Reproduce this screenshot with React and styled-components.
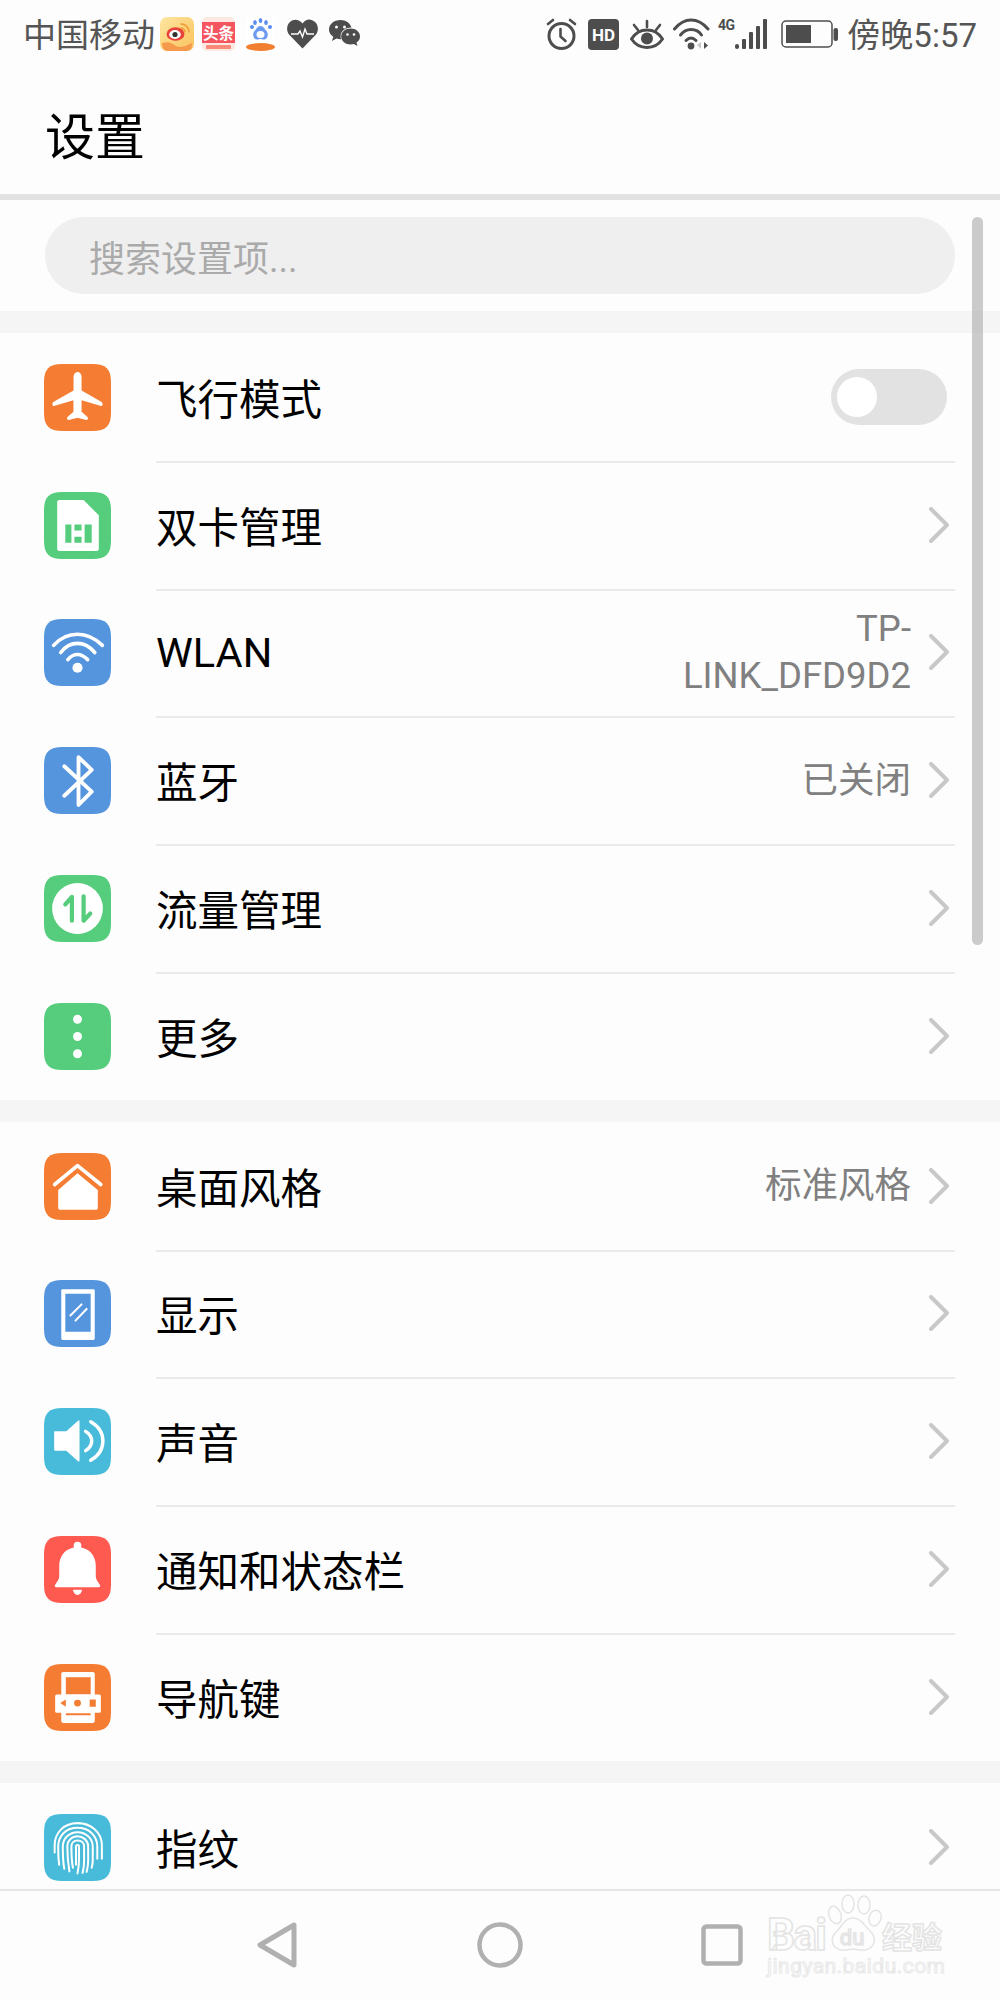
import React from "react";
import styled, { createGlobalStyle } from "styled-components";

const Global = createGlobalStyle`
  html, body { margin: 0; padding: 0; background: #fdfdfd; }
  * { box-sizing: border-box; }
  body { font-family: Roboto, "Noto Sans CJK SC", sans-serif; }
`;

const Phone = styled.div`
  position: relative;
  width: 1000px;
  height: 2000px;
  display: flex;
  flex-direction: column;
  overflow: hidden;
  background: #fdfdfd;
`;
const StatusBar = styled.div`
  height: 68px;
  flex: none;
  display: flex;
  align-items: center;
  justify-content: space-between;
  padding: 0 23px 0 23px;
  color: #555;
  font-size: 33px;
  line-height: 40px;
`;
const StatusGroup = styled.div`
  display: flex;
  align-items: center;
`;
const StatusIcon = styled.svg`
  display: block;
  flex: none;
  margin-left: ${(p) => p.$ml || 0}px;
`;
const Carrier = styled.span`
  white-space: nowrap;
  padding-top: 4px;
`;
const Clock = styled.span`
  margin-left: 9px;
  white-space: nowrap;
  padding-top: 4px;
`;
const TitleBar = styled.header`
  height: 132px;
  flex: none;
  display: flex;
  align-items: center;
  padding: 3px 0 0 45px;
  border-bottom: 6px solid #e2e2e2;
  font-size: 50px;
  color: #000;
`;
const Scroller = styled.main`
  flex: 1;
  min-height: 0;
  overflow: hidden;
`;
const SearchWrap = styled.div`
  height: 111px;
  padding: 17px 45px 0 45px;
`;
const SearchPill = styled.div`
  height: 77px;
  border-radius: 39px;
  background: #efefef;
  color: #aaa;
  font-size: 36px;
  display: flex;
  align-items: center;
  padding-left: 44px;
`;
const Gap = styled.div`
  height: 22px;
  background: #f5f5f5;
`;
const Row = styled.div`
  height: 127.8px;
  display: flex;
  padding: 0 45px 0 44px;
`;
const IconTile = styled.svg`
  display: block;
  flex: none;
  width: 67px;
  height: 67px;
  align-self: center;
  margin: 1px 45px 0 0;
`;
const RowBody = styled.div`
  flex: 1;
  min-width: 0;
  display: flex;
  align-items: center;
  padding-right: 6px;
  margin-bottom: ${(p) => (p.$last ? "0" : "-2px")};
  border-bottom: ${(p) => (p.$last ? "none" : "2px solid #eaeaea")};
`;
const Label = styled.span`
  flex: 1;
  font-size: 41.5px;
  color: #000;
  white-space: nowrap;
`;
const Value = styled.span`
  max-width: 240px;
  text-align: right;
  font-size: 36.5px;
  line-height: 47px;
  color: #808080;
  margin-right: 18px;
`;
const Chevron = styled.svg`
  display: block;
  flex: none;
  width: 20px;
  height: 36px;
`;
const Toggle = styled.div`
  width: 116px;
  height: 56px;
  border-radius: 28px;
  background: #e2e2e2;
  padding: 8px 0 0 6px;
  margin-right: 2px;
`;
const Thumb = styled.div`
  width: 40px;
  height: 40px;
  border-radius: 50%;
  background: #fff;
`;
const ScrollThumb = styled.div`
  position: absolute;
  left: 972px;
  top: 217px;
  width: 11px;
  height: 728px;
  border-radius: 6px;
  background: rgba(170, 170, 170, 0.6);
`;
const NavBar = styled.nav`
  position: relative;
  height: 111px;
  flex: none;
  border-top: 2px solid #e6e6e6;
  background: #fdfdfd;
  display: flex;
  align-items: center;
  padding: 0 0 2px 255px;
`;
const NavIcon = styled.svg`
  display: block;
  flex: none;
  margin-right: ${(p) => p.$mr || 0}px;
`;
const Watermark = styled.svg`
  position: absolute;
  left: 765px;
  top: -1px;
`;

const tile = { orange: "#f57d33", green: "#55cd7c", blue: "#5595dd", cyan: "#47bbd9", red: "#ff5a50" };
const Bg = ({ c }) => <path fill={c} d="M18 0h30c13 0 18 5 18 18v30c0 13-5 18-18 18H18C5 66 0 61 0 48V18C0 5 5 0 18 0z" />;

const icons = {
  plane: (
    <>
      <Bg c={tile.orange} />
      <path fill="#fff" d="M33 8c-2.4 0-3.9 2.2-3.9 5v13L10 37c-1.2.7-1.7 1.5-1.7 2.6 0 1.4 1 2 2.3 1.6L29 35.6V47l-5.3 4.6c-.8.7-1 1.2-1 2.2 0 1 .8 1.6 1.8 1.4l8.5-2.2 8.5 2.2c1 .2 1.8-.4 1.8-1.4 0-1-.2-1.5-1-2.2L37 47V35.6l18.4 5.6c1.3.4 2.3-.2 2.3-1.6 0-1.1-.5-1.9-1.700-2.600L37 26V13c0-2.800-1.600-5-4-5z" />
    </>
  ),
  sim: (
    <>
      <Bg c={tile.green} />
      <path fill="#fff" d="M15 8h24l15 15v33c0 1.2-.8 2-2 2H15c-1.2 0-2-.8-2-2V10c0-1.2.8-2 2-2z" />
      <path fill={tile.green} d="M21 32h6v18h-6zM30 32h7v6h-7zM30 44h7v6h-7zM40 32h7v18h-7z" />
    </>
  ),
  wifi: (
    <>
      <Bg c={tile.blue} />
      <g fill="none" stroke="#fff" strokeWidth="3.6" strokeLinecap="round">
        <path d="M9.5 26C16 18.5 24 15 33 15s17 3.5 24.5 11" />
        <path d="M16.5 33C21 27 27 24 33 24s12 3 17 9" />
        <path d="M23.5 40c2.5-3 6-5 9.5-5s7 2 10 5" />
      </g>
      <circle cx="33" cy="48" r="5" fill="#fff" />
    </>
  ),
  bt: (
    <>
      <Bg c={tile.blue} />
      <path fill="none" stroke="#fff" strokeWidth="3.8" strokeLinecap="round" strokeLinejoin="round" d="M20 19l27 25-13 13V10l13 12.5L20 48" />
    </>
  ),
  data: (
    <>
      <Bg c={tile.green} />
      <circle cx="33" cy="33" r="25" fill="#fff" />
      <g fill="none" stroke={tile.green} strokeWidth="4.2" strokeLinecap="round" strokeLinejoin="round">
        <path d="M27.5 45V21.5L21 29" />
        <path d="M39 21v24l6.5-7" />
      </g>
    </>
  ),
  more: (
    <>
      <Bg c={tile.green} />
      <circle cx="33" cy="16" r="4.4" fill="#fff" />
      <circle cx="33" cy="33" r="4.4" fill="#fff" />
      <circle cx="33" cy="50" r="4.4" fill="#fff" />
    </>
  ),
  home: (
    <>
      <Bg c={tile.orange} />
      <path fill="none" stroke="#fff" strokeWidth="3.6" strokeLinecap="round" strokeLinejoin="round" d="M10.5 31L33 12.5 56 31" />
      <path fill="#fff" d="M33 20l20 16.5V54c0 1.3-.7 2-2 2H16c-1.3 0-2-.7-2-2V36.5z" />
    </>
  ),
  display: (
    <>
      <Bg c={tile.blue} />
      <path fill="#fff" fillRule="evenodd" d="M18.5 9h30c1 0 1.5.5 1.5 1.5v47c0 1-.5 1.5-1.5 1.5h-30c-1 0-1.5-.5-1.5-1.5v-47c0-1 .5-1.5 1.5-1.5zM21 13.5V51h25V13.5z" />
      <path fill="none" stroke="#fff" strokeWidth="2" strokeLinecap="round" d="M26 35l11-11M31 40l11-11.5" />
    </>
  ),
  sound: (
    <>
      <Bg c={tile.cyan} />
      <path fill="#fff" d="M11 23h11l11.5-10.5c.9-.7 1.500-.3 1.500.8v38.400c0 1.100-.6 1.500-1.500.8L22 42H11c-.7 0-1-.4-1-1V24c0-.6.3-1 1-1z" />
      <g fill="none" stroke="#fff" strokeWidth="3.4" strokeLinecap="round">
        <path d="M41 23c4 2.5 6 5.5 6 9.5s-2 7-6 9.5" />
        <path d="M46 13.5c8 4.5 12 11 12 19s-4 14.5-12 19" />
      </g>
    </>
  ),
  bell: (
    <>
      <Bg c={tile.red} />
      <circle cx="33" cy="9.5" r="3.8" fill="#fff" />
      <path fill="#fff" d="M33 11c11 0 18 8 18 18v11c0 3 2 5 4 8 .8 1.3.3 2.500-1 2.500H12c-1.300 0-1.800-1.200-1-2.500 2-3 4-5 4-8V29c0-10 7-18 18-18z" />
      <path fill="#fff" d="M28.5 53h9c-.4 3-2.2 5-4.500 5s-4.100-2-4.500-5z" />
    </>
  ),
  nav: (
    <>
      <Bg c={tile.orange} />
      <path fill="#fff" d="M19 8h29c1.3 0 2 .7 2 2v21H17V10c0-1.3.7-2 2-2zM17 47h33v9c0 1.3-.7 2-2 2H19c-1.3 0-2-.7-2-2z" />
      <path fill={tile.orange} d="M21.5 13H46v17H21.5z" />
      <rect x="11" y="30" width="45" height="18" rx="1.5" fill="#fff" />
      <path fill={tile.orange} d="M16 38.5l5.5-3.5v7zM45 35h6v7h-6zM21.5 48.500H46v2H21.500z" />
      <circle cx="33" cy="38.5" r="3.4" fill={tile.orange} />
    </>
  ),
  finger: (
    <>
      <Bg c={tile.cyan} />
      <g fill="none" stroke="#fff" strokeWidth="2" strokeLinecap="round">
        <path d="M10.5 38V31C10.5 18 20 9 33 9s24 9 24 22v13" />
        <path d="M15 50c-.6-4-1-9-1-18C14 21 22 13.5 33 13.5S52.5 21 52.5 32v12" />
        <path d="M20 54c-1-5-1.500-13-1.500-22 0-8 6.500-14 14.500-14s15 6 15 14v14c0 3-.5 5-1 7" />
        <path d="M25 56.5c-1.200-7-2-15-2-24.500 0-6 4.500-10 10-10s10.500 4 10.500 10v14c0 4-.8 8-1.500 11" />
        <path d="M38 58c1-4 1.500-8 1.500-12V32c0-3.500-2.800-6-6.500-6s-6 2.500-6 6c0 8 .3 15 1.500 21" />
        <path d="M33 58.5c1-5 1.500-9 1.500-14V32c0-1-.5-1.500-1.500-1.500s-1.500.5-1.500 1.500v18" />
      </g>
    </>
  ),
};

const ChevronIcon = () => (
  <Chevron viewBox="0 0 20 36">
    <path d="M2 2l16 16L2 34" fill="none" stroke="#c8c8c8" strokeWidth="4" strokeLinecap="round" strokeLinejoin="round" />
  </Chevron>
);

const SettingRow = ({ icon, label, value, toggle, last }) => (
  <Row>
    <IconTile viewBox="0 0 66 66">{icons[icon]}</IconTile>
    <RowBody $last={last}>
      <Label>{label}</Label>
      {value && <Value>{value}</Value>}
      {toggle ? (
        <Toggle>
          <Thumb />
        </Toggle>
      ) : (
        <ChevronIcon />
      )}
    </RowBody>
  </Row>
);

const dark = "#4d4d4d";

export default function App() {
  return (
    <Phone>
      <Global />
      <StatusBar>
        <StatusGroup>
          <Carrier>中国移动</Carrier>
          <StatusIcon $ml={5} width="34" height="34" viewBox="0 0 34 34">
            <defs>
              <linearGradient id="wb" x1="0" y1="0" x2="1" y2="1">
                <stop offset="0" stopColor="#fde6a0" />
                <stop offset="1" stopColor="#fbc25c" />
              </linearGradient>
            </defs>
            <rect width="34" height="34" rx="7" fill="url(#wb)" />
            <path fill="#f59a4c" d="M2 26c6-2 10 0 14 3 4 2 8 1 16-3v1c0 5-2 7-7 7H8c-4 0-6-3-6-8z" />
            <ellipse cx="15.5" cy="17" rx="9" ry="6.8" fill="#e8423a" />
            <ellipse cx="15" cy="17.5" rx="5.8" ry="4.4" fill="#fff" />
            <circle cx="15" cy="17.5" r="2.6" fill="#333" />
            <path fill="none" stroke="#ee9b35" strokeWidth="1.5" strokeLinecap="round" d="M21 7c4 0 8 3 8 8M21 11c2 0 4 2 4 4" />
          </StatusIcon>
          <StatusIcon $ml={8} width="33" height="34" viewBox="0 0 33 34">
            <rect width="33" height="34" rx="5" fill="#fde9e2" />
            <rect y="5" width="33" height="21" fill="#f4555e" />
            <text x="16.5" y="22" textAnchor="middle" fontSize="15.5" fontWeight="700" fill="#fff" fontFamily="'Noto Sans CJK SC', sans-serif">头条</text>
            <rect x="4" y="28" width="25" height="4" rx="1" fill="#f78a7a" />
          </StatusIcon>
          <StatusIcon $ml={11} width="29" height="34" viewBox="0 0 29 34">
            <rect width="29" height="28" rx="3" fill="#fff" />
            <ellipse cx="9" cy="5.5" rx="1.8" ry="2.6" fill="#5c8df0" />
            <ellipse cx="14.5" cy="3.5" rx="1.8" ry="2.6" fill="#5c8df0" />
            <ellipse cx="20" cy="5.5" rx="1.8" ry="2.6" fill="#5c8df0" />
            <circle cx="24" cy="10" r="2" fill="#5c8df0" />
            <circle cx="6" cy="10" r="2" fill="#5c8df0" />
            <path fill="#6d9bf2" d="M14.5 9c3 0 4 3 6 5 2 2 2 8-2 8.5-2 .3-3-.5-4-.5s-2 .8-4 .5c-4-.5-4-6.5-2-8.5 2-2 3-5 6-5z" />
            <ellipse cx="14.5" cy="17.5" rx="4" ry="3.5" fill="#fff" />
            <ellipse cx="14.5" cy="30" rx="14.5" ry="4" fill="#f08030" />
          </StatusIcon>
          <StatusIcon $ml={12} width="31" height="30" viewBox="0 0 31 30">
            <path fill={dark} d="M15.5 29.5L2.5 16C-1 12-.5 6 3 3c4-3.5 9-2.5 12.5 1.5C19-.5 24-.5 28 3c3.5 3 4 9 .5 13z" />
            <path fill="none" stroke="#fdfdfd" strokeWidth="1.4" d="M4 15h7l2-3 2.5 6 2.5-8 2 5h7" />
          </StatusIcon>
          <StatusIcon $ml={11} width="31" height="28" viewBox="0 0 31 28">
            <path fill={dark} d="M11.500 0C5 0 0 4.200 0 9.500c0 3 1.700 5.600 4.300 7.300L3 21l4.500-2.400c1.300.4 2.600.6 4 .6h.6c-.3-1-.5-1.800-.5-2.800 0-5 4.600-8.800 10.400-8.800h.5C21.200 3.100 16.800 0 11.500 0z" />
            <path fill={dark} d="M31 16.500c0-4.500-4.200-8-9.400-8s-9.400 3.500-9.400 8 4.200 8 9.400 8c1.100 0 2.200-.2 3.200-.5l3.700 2-1-3.400c2.300-1.500 3.500-3.700 3.500-6.100z" />
            <circle cx="7.5" cy="7" r="1.5" fill="#fdfdfd" />
            <circle cx="15.5" cy="7" r="1.5" fill="#fdfdfd" />
            <circle cx="18.5" cy="14.5" r="1.3" fill="#fdfdfd" />
            <circle cx="25" cy="14.5" r="1.3" fill="#fdfdfd" />
          </StatusIcon>
        </StatusGroup>
        <StatusGroup>
          <StatusIcon width="31" height="32" viewBox="0 0 31 32">
            <circle cx="15.5" cy="18" r="12.5" fill="none" stroke={dark} strokeWidth="3" />
            <path fill="none" stroke={dark} strokeWidth="2.6" strokeLinecap="round" strokeLinejoin="round" d="M14.5 11v7.500l5 4.500M2 6l5-4M29 6l-5-4" />
          </StatusIcon>
          <StatusIcon $ml={11} width="31" height="31" viewBox="0 0 31 31">
            <rect width="31" height="31" rx="4" fill={dark} />
            <text x="15.5" y="21.5" textAnchor="middle" fontSize="17" fontWeight="700" fill="#fff" fontFamily="Roboto, sans-serif">HD</text>
          </StatusIcon>
          <StatusIcon $ml={11} width="34" height="30" viewBox="0 0 34 30">
            <path fill="none" stroke={dark} strokeWidth="3" d="M1.5 20C5.5 13.5 11 11 17 11s11.500 2.500 15.500 9c-4 6-9.500 8.500-15.500 8.500S5.500 26 1.500 20z" />
            <circle cx="17" cy="19.5" r="6" fill={dark} />
            <path fill="none" stroke={dark} strokeWidth="2.6" strokeLinecap="round" d="M17 2v6M4 6l4 5M30 6l-4 5" />
          </StatusIcon>
          <StatusIcon $ml={9} width="37" height="32" viewBox="0 0 37 32">
            <g fill="none" stroke={dark} strokeWidth="3" strokeLinecap="round">
              <path d="M1.5 11C6.500 5 12 2 18 2s12 3 17 9" />
              <path d="M7.5 17C10.500 13 14 11.500 18 11.500s8 1.500 10.500 5.500" />
              <path d="M13 22.500c1.500-1.500 3-2.500 5-2.500s3.500 1 5 2.500" />
            </g>
            <circle cx="18" cy="28" r="3.4" fill={dark} />
            <path fill="#c8c8c8" d="M24 27l4-3v7z" />
            <path fill={dark} d="M31 24l4 3.500-4 3.500z" />
          </StatusIcon>
          <StatusIcon $ml={8} width="49" height="32" viewBox="0 0 49 32">
            <text x="0" y="12" fontSize="14" fontWeight="700" fill={dark} fontFamily="Roboto, sans-serif" textLength="17">4G</text>
            <rect x="17" y="26" width="4" height="5" rx="2" fill={dark} />
            <rect x="24" y="21" width="4" height="10" rx="1" fill={dark} />
            <rect x="31" y="14" width="4" height="17" rx="1" fill={dark} />
            <rect x="38" y="8" width="4" height="23" rx="1" fill={dark} />
            <rect x="45" y="1" width="4" height="30" rx="1" fill={dark} />
          </StatusIcon>
          <StatusIcon $ml={14} width="57" height="28" viewBox="0 0 57 28">
            <rect x="1" y="1" width="50" height="26" rx="4" fill="none" stroke={dark} strokeWidth="1.5" />
            <rect x="5" y="5" width="25" height="18" fill={dark} />
            <rect x="52.5" y="8" width="4.5" height="13" rx="2" fill={dark} />
          </StatusIcon>
          <Clock>傍晚5:57</Clock>
        </StatusGroup>
      </StatusBar>
      <TitleBar>设置</TitleBar>
      <Scroller>
        <SearchWrap>
          <SearchPill>搜索设置项...</SearchPill>
        </SearchWrap>
        <Gap />
        <SettingRow icon="plane" label="飞行模式" toggle />
        <SettingRow icon="sim" label="双卡管理" />
        <SettingRow icon="wifi" label="WLAN" value="TP-LINK_DFD9D2" />
        <SettingRow icon="bt" label="蓝牙" value="已关闭" />
        <SettingRow icon="data" label="流量管理" />
        <SettingRow icon="more" label="更多" last />
        <Gap />
        <SettingRow icon="home" label="桌面风格" value="标准风格" />
        <SettingRow icon="display" label="显示" />
        <SettingRow icon="sound" label="声音" />
        <SettingRow icon="bell" label="通知和状态栏" />
        <SettingRow icon="nav" label="导航键" last />
        <Gap />
        <SettingRow icon="finger" label="指纹" />
      </Scroller>
      <ScrollThumb />
      <NavBar>
        <NavIcon $mr={178} width="44" height="50" viewBox="0 0 44 50">
          <path d="M39 5L5 25l34 20z" fill="none" stroke="#b0b0b0" strokeWidth="5" strokeLinejoin="round" />
        </NavIcon>
        <NavIcon $mr={178} width="46" height="46" viewBox="0 0 46 46">
          <circle cx="23" cy="23" r="20.5" fill="none" stroke="#b0b0b0" strokeWidth="4.5" />
        </NavIcon>
        <NavIcon width="42" height="42" viewBox="0 0 42 42">
          <rect x="2.5" y="2.5" width="37" height="37" rx="3" fill="none" stroke="#b0b0b0" strokeWidth="4.5" />
        </NavIcon>
        <Watermark width="190" height="92" viewBox="765 1890 190 92">
          <g fill="#fdfdfd" stroke="#e4e4e4" strokeWidth="1.5">
            <text x="767" y="1950" fontSize="44" fontWeight="700" fontFamily="Roboto, sans-serif" textLength="60">Bai</text>
            <ellipse cx="848" cy="1904" rx="6" ry="9" />
            <ellipse cx="864" cy="1905" rx="6" ry="9" />
            <ellipse cx="835" cy="1915" rx="6" ry="9" transform="rotate(-20 835 1915)" />
            <ellipse cx="875" cy="1918" rx="6" ry="8" transform="rotate(20 875 1918)" />
            <path d="M853 1918c9 0 12 9 18 14 6 6 4 17-7 18-5 .3-8-1-11-1s-6 1.5-11 1c-11-1-12-12-6-18 6-5 8-14 17-14z" />
            <text x="852" y="1945" textAnchor="middle" fontSize="22" fontWeight="400" fontFamily="Roboto, sans-serif">du</text>
            <text x="882" y="1948" fontSize="30" fontWeight="700" fontFamily="'Noto Sans CJK SC', sans-serif">经验</text>
          </g>
          <text x="767" y="1973" fontSize="21" fill="#fdfdfd" stroke="#e8e8e8" strokeWidth="1" fontFamily="Roboto, sans-serif" textLength="178">jingyan.baidu.com</text>
        </Watermark>
      </NavBar>
    </Phone>
  );
}
